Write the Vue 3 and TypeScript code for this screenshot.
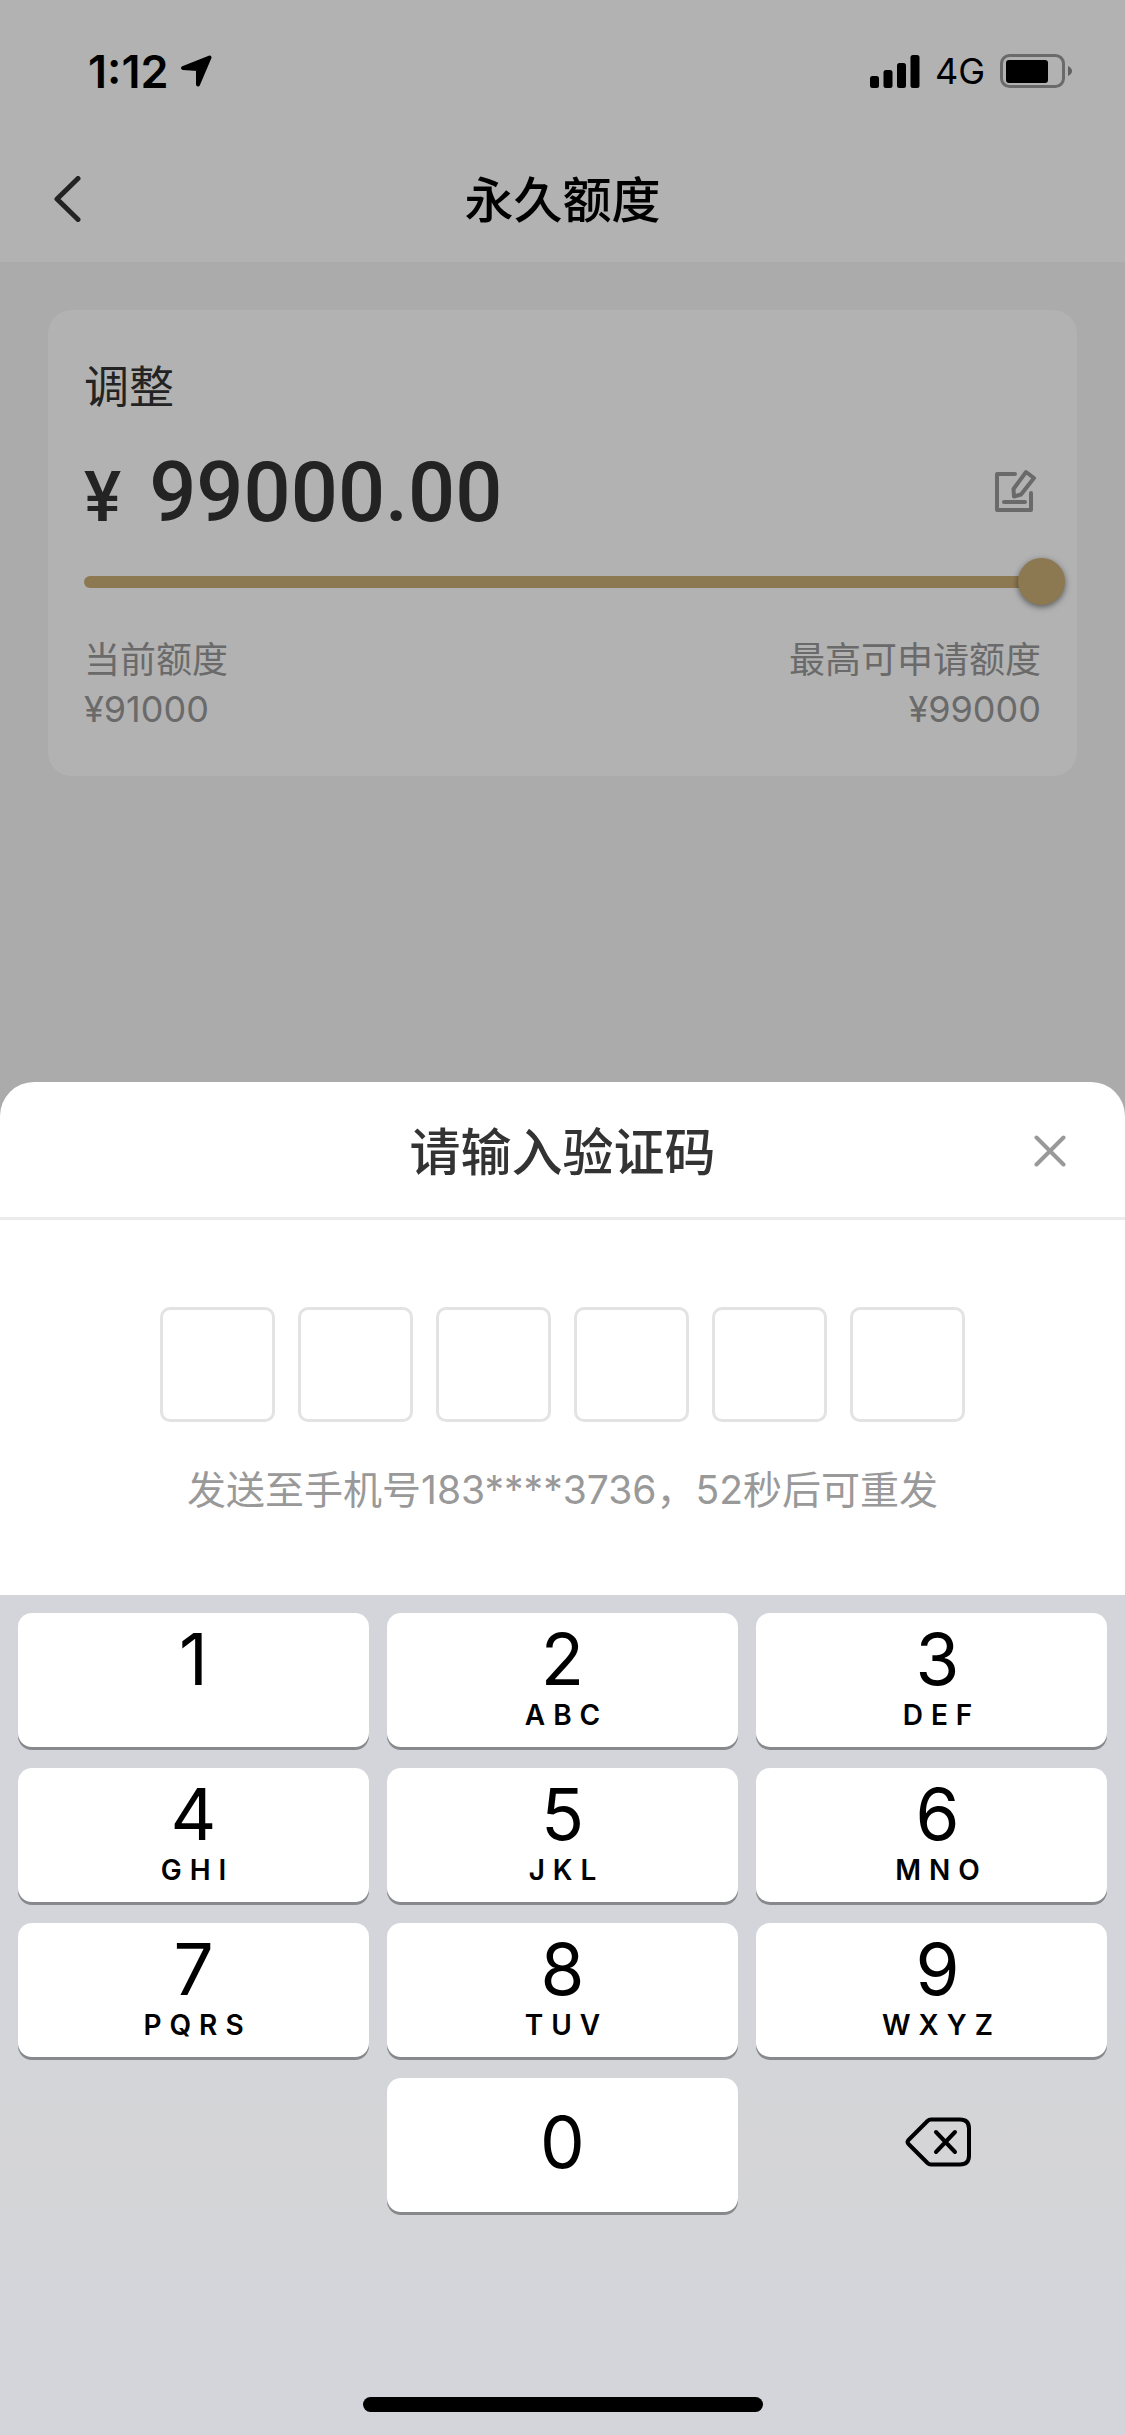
<script setup lang="ts">
import { ref } from 'vue'

interface Key {
  digit: string
  letters: string
}

const keys: Key[] = [
  { digit: '1', letters: '' },
  { digit: '2', letters: 'ABC' },
  { digit: '3', letters: 'DEF' },
  { digit: '4', letters: 'GHI' },
  { digit: '5', letters: 'JKL' },
  { digit: '6', letters: 'MNO' },
  { digit: '7', letters: 'PQRS' },
  { digit: '8', letters: 'TUV' },
  { digit: '9', letters: 'WXYZ' },
]

const min = 91000
const max = 99000
const amount = ref(max)
const code = ref('')
const seconds = ref(52)

function press(digit: string) {
  if (code.value.length < 6) code.value += digit
}
function erase() {
  code.value = code.value.slice(0, -1)
}
</script>

<template>
  <div class="app">
    <div class="page">
      <div class="top">
        <div class="status">
          <div class="status-left">
            <span class="time">1:12</span>
            <svg class="arrow" width="32" height="32" viewBox="0 0 32 32" aria-hidden="true">
              <path d="M3 13 29.500 2.500 18 29.500V14Z" fill="#000" stroke="#000" stroke-width="4" stroke-linejoin="round" />
            </svg>
          </div>
          <div class="status-right">
            <svg width="50" height="34" viewBox="0 0 50 34" aria-hidden="true">
              <rect x="0" y="22" width="9" height="12" rx="2.500" />
              <rect x="13.500" y="16" width="9" height="18" rx="2.500" />
              <rect x="27" y="9" width="9" height="25" rx="2.500" />
              <rect x="40.500" y="1" width="9" height="33" rx="2.500" />
            </svg>
            <span class="network">4G</span>
            <svg width="72" height="34" viewBox="0 0 72 34" aria-hidden="true">
              <rect x="1.500" y="1.500" width="62" height="31" rx="8" fill="none" stroke="#000" stroke-opacity=".4" stroke-width="3" />
              <rect x="6" y="6" width="42" height="23" rx="3" />
              <path d="M68 12c2.500 1 4 3 4 5s-1.500 4-4 5z" fill-opacity=".45" />
            </svg>
          </div>
        </div>
        <header class="nav">
          <button class="back" aria-label="返回">
            <svg width="27" height="46" viewBox="0 0 27 46" aria-hidden="true">
              <path d="M24 2.500 3 23l21 20.500" fill="none" stroke="#333" stroke-width="5" stroke-linecap="round" stroke-linejoin="round" />
            </svg>
          </button>
          <h1>永久额度</h1>
        </header>
      </div>

      <section class="card">
        <label class="label" for="limit">调整</label>
        <div class="amount-row">
          <div class="amount"><span class="yen">¥</span><span>{{ amount.toFixed(2) }}</span></div>
          <button class="edit" aria-label="编辑">
            <svg width="44" height="44" viewBox="0 0 44 44" fill="none" stroke="#999" stroke-width="4" stroke-linecap="round" stroke-linejoin="round" aria-hidden="true">
              <path d="M22 5H4V41H38V24" />
              <path d="M11 33H32" />
              <path d="M33 3 41 9 28 25.500 21 27.500 20.500 20Z" />
            </svg>
          </button>
        </div>
        <input id="limit" v-model.number="amount" class="slider" type="range" :min="min" :max="max" step="1000" />
        <div class="bounds">
          <div>当前额度<br />¥{{ min }}</div>
          <div class="right">最高可申请额度<br />¥{{ max }}</div>
        </div>
      </section>
    </div>

    <div class="mask">
      <section class="sheet" role="dialog" aria-labelledby="sheet-title">
        <header class="sheet-head">
          <h2 id="sheet-title">请输入验证码</h2>
          <button class="close" aria-label="关闭">
            <svg width="32" height="32" viewBox="0 0 32 32" aria-hidden="true">
              <path d="M2.500 2.500 29.500 29.500M29.500 2.500 2.500 29.500" stroke="#999" stroke-width="4" stroke-linecap="round" />
            </svg>
          </button>
        </header>
        <div class="verify">
          <div class="boxes">
            <input v-for="n in 6" :key="n" :value="code[n - 1] ?? ''" :aria-label="`验证码第${n}位`" inputmode="numeric" maxlength="1" readonly />
          </div>
          <p class="hint">发送至手机号183****3736，{{ seconds }}秒后可重发</p>
        </div>
      </section>

      <div class="keyboard">
        <div class="keys">
          <button v-for="key in keys" :key="key.digit" class="key" @click="press(key.digit)">
            <span class="digit">{{ key.digit }}</span>
            <span class="letters">{{ key.letters }}</span>
          </button>
          <button class="key zero" @click="press('0')"><span class="digit">0</span></button>
          <button class="erase" aria-label="删除" @click="erase">
            <svg width="66" height="50" viewBox="0 0 66 50" fill="none" stroke="#000" stroke-width="4" stroke-linecap="round" stroke-linejoin="round" aria-hidden="true">
              <path d="M26 2.500H55Q64 2.500 64 11.500V38.500Q64 47.500 55 47.500H26Q24 47.500 22.500 46L3.500 27Q1.500 25 3.500 23L22.500 4Q24 2.500 26 2.500Z" />
              <path d="M31 15 50 35M50 15 31 35" />
            </svg>
          </button>
        </div>
        <div class="home"></div>
      </div>
    </div>
  </div>
</template>

<style>
body {
  margin: 0;
}
</style>

<style scoped>
.app {
  display: grid;
  min-height: 100vh;
  font-family: Inter, 'Noto Sans CJK SC', sans-serif;
  color: #333;
}
button {
  padding: 0;
  border: 0;
  background: none;
  font: inherit;
  color: #000;
}
svg {
  display: block;
}
.page,
.mask {
  grid-area: 1 / 1;
  min-width: 0;
}
.page {
  background: #f5f5f5;
}
.top {
  background: #fff;
}
.status {
  display: flex;
  justify-content: space-between;
  align-items: center;
  height: 142px;
  padding: 0 53px 0 88px;
  color: #000;
}
.status-left,
.status-right {
  display: flex;
  align-items: center;
}
.status-left {
  gap: 12px;
}
.status-right {
  gap: 15px;
}
.time {
  font-size: 45px;
  font-weight: 600;
}
.network {
  font-size: 36px;
}
.nav {
  display: grid;
  grid-template-columns: 1fr auto 1fr;
  align-items: center;
  height: 114px;
  padding: 0 54px 6px;
}
.back {
  justify-self: start;
}
h1,
h2 {
  margin: 0;
  padding-top: 4px;
  font-weight: 500;
}
h1 {
  font-size: 49px;
  line-height: 72px;
  color: #000;
}
.card {
  margin: 48px;
  padding: 42px 36px;
  border-radius: 24px;
  background: #fff;
}
.label {
  display: block;
  font-size: 45px;
  line-height: 72px;
}
.amount-row {
  display: flex;
  justify-content: space-between;
  align-items: center;
  height: 134px;
  padding-right: 4px;
}
.amount {
  display: flex;
  align-items: baseline;
  gap: 28px;
  padding-top: 8px;
  font-family: Roboto, sans-serif;
  font-size: 83px;
  line-height: 96px;
  font-weight: 500;
}
.yen {
  font-size: 70px;
}
.slider {
  display: block;
  width: calc(100% + 24px);
  height: 48px;
  margin: 0;
  appearance: none;
  background: none;
}
.slider::-webkit-slider-runnable-track {
  height: 12px;
  border-radius: 6px;
  background: linear-gradient(#cbae75, #cbae75) left / calc(100% - 24px) 100% no-repeat;
}
.slider::-webkit-slider-thumb {
  appearance: none;
  width: 47px;
  height: 47px;
  margin-top: -18px;
  border-radius: 50%;
  background: #cbae75;
  box-shadow: 0 2px 6px rgba(0, 0, 0, 0.5);
}
.bounds {
  display: flex;
  justify-content: space-between;
  margin-top: 30px;
  font-size: 36px;
  line-height: 49px;
  color: #999;
}
.right {
  text-align: right;
}
.mask {
  display: flex;
  flex-direction: column;
  justify-content: flex-end;
  background: rgba(0, 0, 0, 0.3);
}
.sheet {
  border-radius: 34px 34px 0 0;
  background: #fff;
}
.sheet-head {
  display: grid;
  grid-template-columns: 1fr auto 1fr;
  align-items: center;
  height: 133px;
  padding: 2px 59px 0;
  border-bottom: 3px solid #ebebeb;
}
h2 {
  grid-column: 2;
  font-size: 51px;
  line-height: 72px;
}
.close {
  justify-self: end;
}
.verify {
  padding: 87px 0 77px;
}
.boxes {
  display: flex;
  justify-content: center;
  gap: 23px;
}
.boxes input {
  box-sizing: border-box;
  width: 115px;
  height: 115px;
  padding: 0;
  border: 3px solid #e3e3e3;
  border-radius: 10px;
  background: #fff;
  font: inherit;
  font-size: 51px;
  text-align: center;
  outline: 0;
}
.hint {
  margin: 40px 0 0;
  font-size: 39px;
  line-height: 56px;
  text-align: center;
  color: #999;
}
.keyboard {
  padding: 18px 18px 23px;
  background: linear-gradient(#d3d5da 50%, #d5d5d7 65%, #d4d5da 85%);
}
.keys {
  display: grid;
  grid-template-columns: repeat(3, 1fr);
  grid-auto-rows: 134px;
  gap: 21px 18px;
}
.key {
  display: flex;
  flex-direction: column;
  align-items: center;
  padding-top: 10px;
  border-radius: 14px;
  background: #fff;
  box-shadow: 0 3px 0 #88898d;
}
.key:nth-child(3n) {
  padding-left: 12px;
}
.digit {
  font-size: 71px;
  line-height: 72px;
}
.letters {
  padding-left: 8px;
  font-size: 28px;
  line-height: 40px;
  font-weight: 600;
  letter-spacing: 8px;
}
.zero {
  grid-column: 2;
  justify-content: center;
  padding: 0 0 6px;
}
.erase {
  justify-self: center;
  align-self: center;
  padding: 0 0 6px 12px;
}
.home {
  width: 400px;
  height: 15px;
  margin: 185px auto 0;
  border-radius: 8px;
  background: #000;
}
</style>
